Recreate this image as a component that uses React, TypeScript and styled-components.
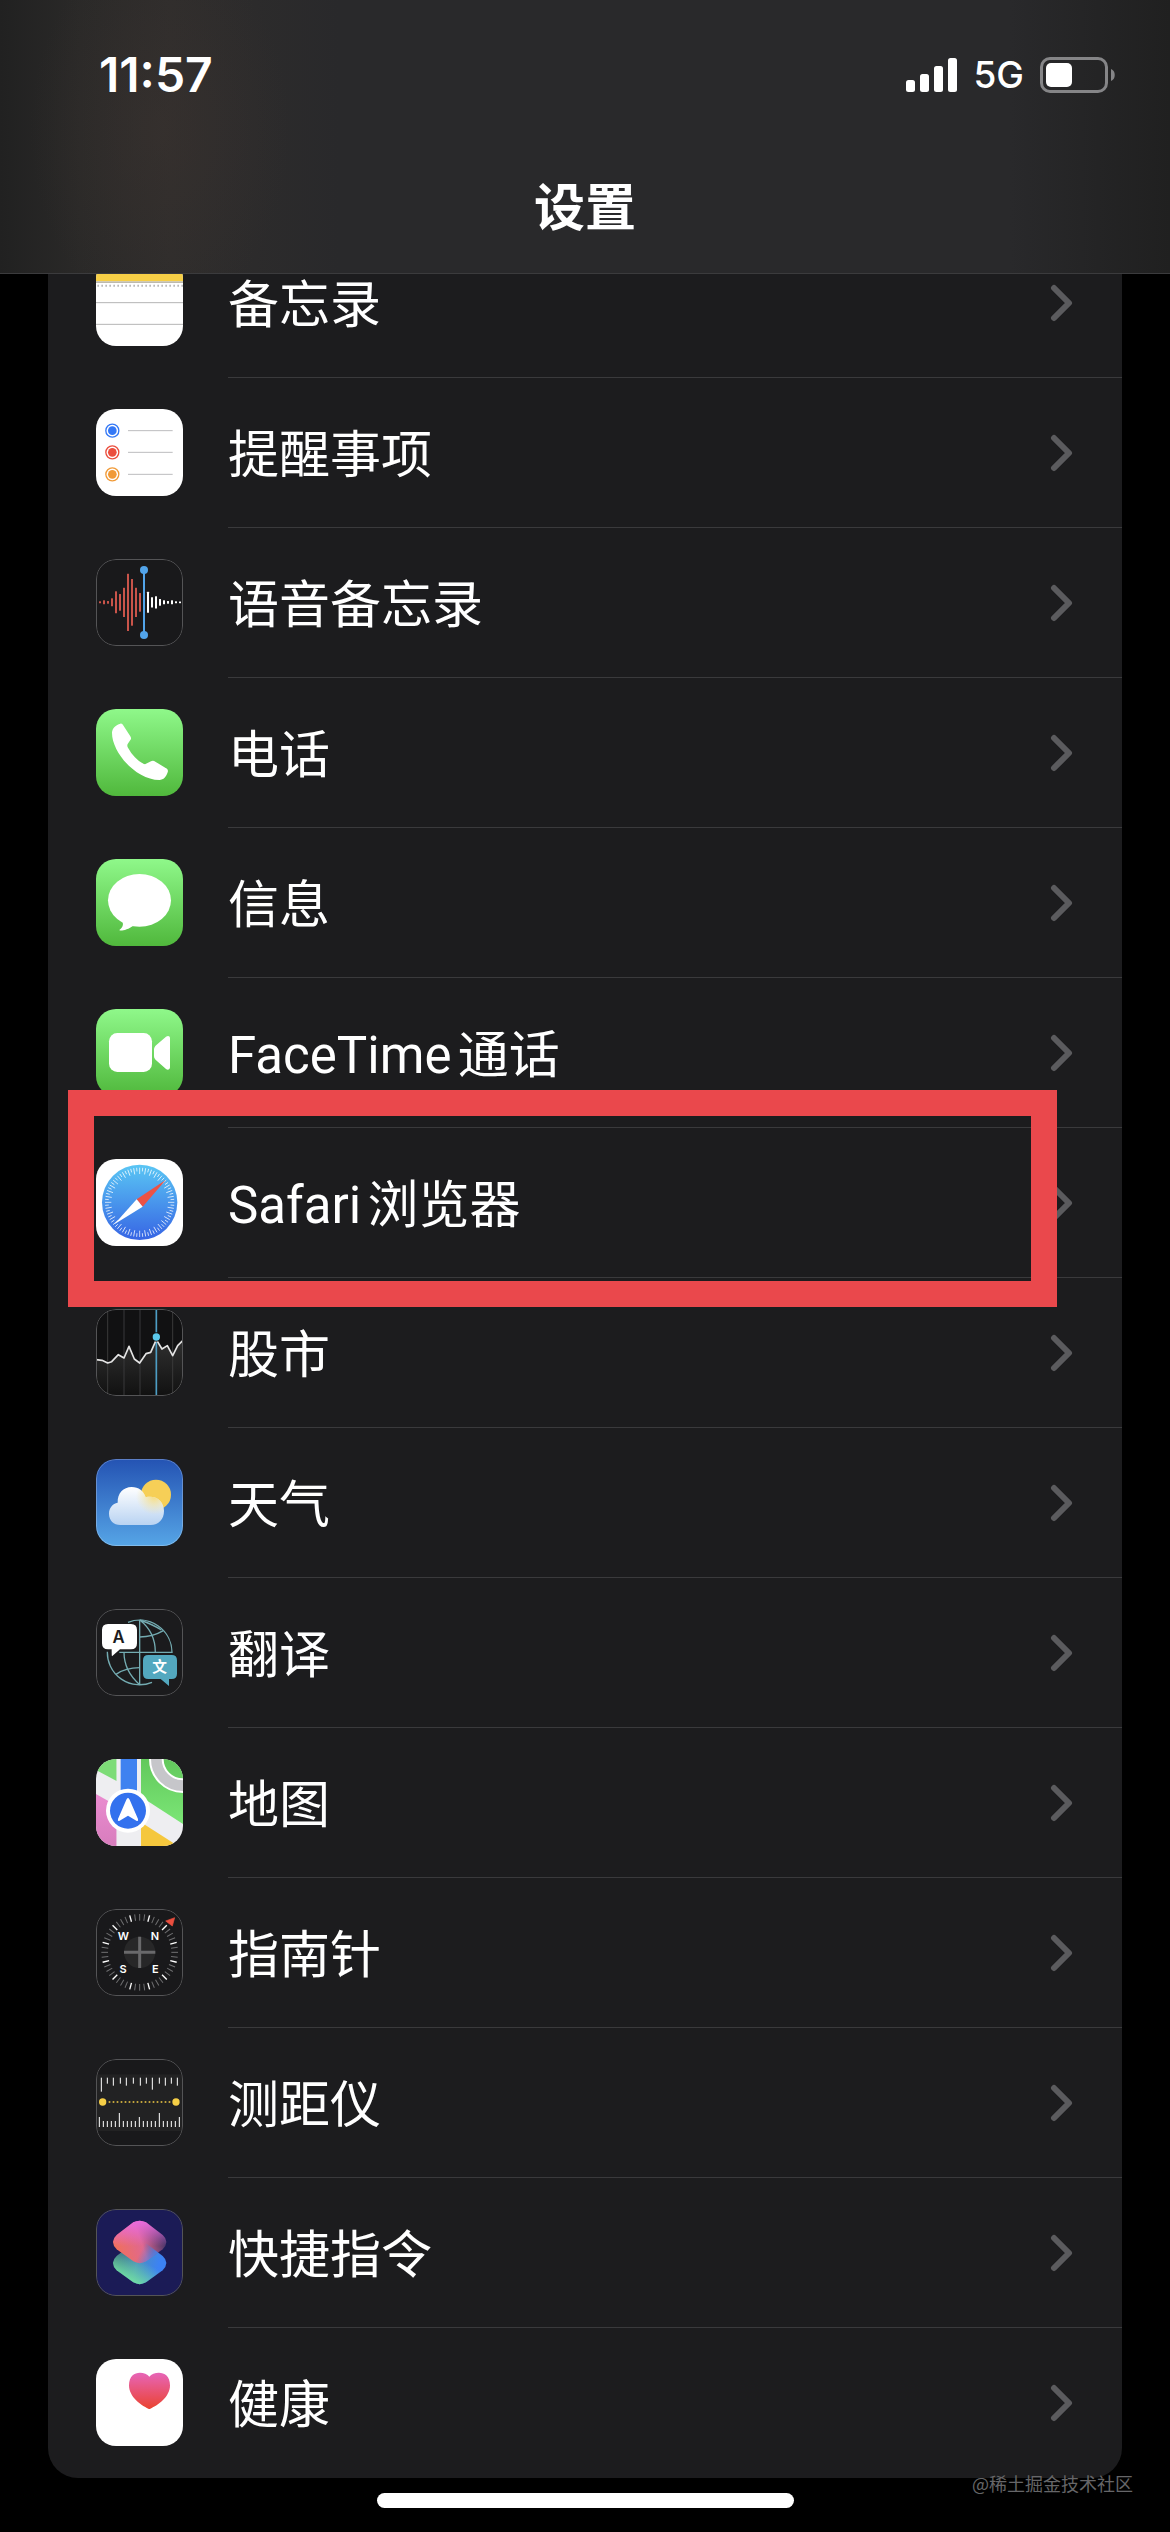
import React from "react";
import styled, { createGlobalStyle } from "styled-components";

const GlobalStyle = createGlobalStyle`
  *, *::before, *::after { box-sizing: border-box; }
  body {
    margin: 0;
    background: #000;
    color: #fff;
    font-family: Inter, "Noto Sans CJK SC", sans-serif;
  }
`;

const Screen = styled.div`
  position: relative;
  min-height: 100vh;
  display: flex;
  flex-direction: column;
  background: #000;
`;

const Header = styled.header`
  position: sticky;
  top: 0;
  z-index: 2;
  padding-bottom: 6px;
  border-bottom: 1px solid #3b3b3d;
  background:
    radial-gradient(ellipse 130px 190px at 160px 130px, rgba(62, 52, 48, 0.4), rgba(62, 52, 48, 0)),
    linear-gradient(90deg, #212121 0, #2a2928 80px, #2f2d2c 170px, #29292b 340px, #29292b calc(100% - 160px), #202020 100%);
`;

const StatusBar = styled.div`
  height: 149px;
  display: flex;
  align-items: center;
  justify-content: space-between;
  padding: 0 54px 0 99px;
`;

const Clock = styled.time`
  font-size: 48px;
  line-height: 54px;
  font-weight: 600;
`;

const StatusIcons = styled.div`
  display: flex;
  align-items: center;
  gap: 16px;
`;

const Network = styled.span`
  font-size: 37px;
  line-height: 44px;
  font-weight: 500;
`;

const Title = styled.h1`
  margin: 0;
  font-size: 51px;
  line-height: 118px;
  font-weight: 700;
  text-align: center;
`;

const Main = styled.main`
  flex: 1;
  padding: 0 48px;
`;

/* The list is scrolled so that its first row sits partly under the header. */
const List = styled.ul`
  list-style: none;
  margin: -46px 0 0;
  padding: 0;
  border-radius: 0 0 30px 30px;
  background: #1c1c1e;
`;

const Item = styled.li`
  position: relative;
`;

const RowLink = styled.a`
  height: 150px;
  display: flex;
  align-items: center;
  gap: 45px;
  padding-left: 48px;
  color: inherit;
  text-decoration: none;
`;

const RowBody = styled.span<{ $last: boolean }>`
  flex: 1;
  align-self: stretch;
  display: flex;
  align-items: center;
  justify-content: space-between;
  padding-right: 48px;
  border-bottom: 1px solid ${(p) => (p.$last ? "transparent" : "#3a3a3c")};
`;

const Label = styled.span`
  padding-top: 7px;
  font-family: Roboto, "Noto Sans CJK SC", sans-serif;
  font-size: 51px;
  line-height: 72px;
  text-autospace: normal;
`;

const AppIcon = styled.svg`
  flex: none;
  display: block;
  width: 87px;
  height: 87px;
  margin-bottom: 1px;
  border-radius: 20px;
`;

const Highlight = styled.div`
  position: absolute;
  z-index: 1;
  top: -38px;
  right: 65px;
  bottom: -29px;
  left: 20px;
  border: 26px solid #ea484c;
  pointer-events: none;
`;

const Footer = styled.footer`
  display: flex;
  justify-content: center;
  padding: 15px 0 24px;
`;

const HomeIndicator = styled.div`
  width: 417px;
  height: 15px;
  border-radius: 8px;
  background: #fff;
`;

const Watermark = styled.span`
  position: absolute;
  right: 37px;
  bottom: 36px;
  font-family: "Noto Sans CJK SC", sans-serif;
  font-size: 18px;
  line-height: 26px;
  color: #666668;
`;

const Signal = () => (
  <svg width="51" height="34" viewBox="0 0 51 34" fill="#fff" aria-hidden="true">
    <rect x="0" y="22" width="9" height="12" rx="2.5" />
    <rect x="14" y="16" width="9" height="18" rx="2.5" />
    <rect x="28" y="8" width="9" height="26" rx="2.5" />
    <rect x="42" y="0" width="9" height="34" rx="2.5" />
  </svg>
);

const Battery = () => (
  <svg width="76" height="36" viewBox="0 0 76 36" aria-hidden="true">
    <rect x="1.5" y="1.5" width="65" height="33" rx="8.5" fill="none" stroke="#858587" strokeWidth="3" />
    <rect x="6" y="6" width="26" height="24" rx="5" fill="#fff" />
    <path d="M71 12c5 1.500 5 10.500 0 12z" fill="#858587" />
  </svg>
);

const Chevron = () => (
  <svg width="24" height="38" viewBox="0 0 24 38" aria-hidden="true">
    <path d="M4 4l15 15L4 34" fill="none" stroke="#5b5b5e" strokeWidth="6" strokeLinecap="round" strokeLinejoin="round" />
  </svg>
);

const Frame = () => (
  <rect x="1.500" y="1.500" width="258" height="258" rx="58.500" fill="none" stroke="#545456" strokeWidth="3" />
);

const NotesIcon = () => (
  <>
    <rect width="261" height="261" fill="#fff" />
    <rect width="261" height="67" fill="#f7cf46" />
    <rect y="67" width="261" height="5" fill="#bdb9ad" />
    <path d="M4 80H261" stroke="#b9b9b9" strokeWidth="6" strokeDasharray="5 7" />
    <path d="M0 131H261M0 196H261" stroke="#b5b5b5" strokeWidth="3" />
  </>
);

const RemindersIcon = () => (
  <>
    <rect width="261" height="261" fill="#fff" />
    {[["#3478f6", 65], ["#eb4e3d", 130], ["#f19a37", 196]].map(([c, y]) => (
      <g key={c}>
        <circle cx="49" cy={y} r="19.500" fill="none" stroke={c as string} strokeWidth="4" />
        <circle cx="49" cy={y} r="13" fill={c as string} />
        <path d={`M96 ${y}H230`} stroke="#bcbcbe" strokeWidth="3" />
      </g>
    ))}
  </>
);

const waveHeights = [6, 12, 8, 24, 66, 50, 88, 172, 140, 88, 56, 0, 63, 31, 37, 20, 12, 8, 12, 6, 5];

const VoiceMemosIcon = () => (
  <>
    <rect width="261" height="261" fill="#19191b" />
    {waveHeights.map((h, i) => (
      <rect key={i} x={9 + i * 12} y={130 - h / 2} width="6" height={h} rx="1" fill={i < 11 ? "#c9544a" : "#fff"} />
    ))}
    <path d="M144 33V228" stroke="#52a4ea" strokeWidth="6" />
    <circle cx="144" cy="33" r="12" fill="#52a4ea" />
    <circle cx="144" cy="228" r="12" fill="#52a4ea" />
    <Frame />
  </>
);

const GreenTile = ({ id }: { id: string }) => (
  <>
    <defs>
      <linearGradient id={id} x1="0" y1="0" x2="0" y2="1">
        <stop offset="0" stopColor="#8ff88a" />
        <stop offset="1" stopColor="#50b83c" />
      </linearGradient>
    </defs>
    <rect width="261" height="261" fill={`url(#${id})`} />
  </>
);

const PhoneIcon = () => (
  <>
    <GreenTile id="phone" />
    <path
      fill="#fff"
      d="M48 72C48 58 60 47 73 44C78 43 80 46 83 51L103 82C106 87 106 90 103 93L95 105C93 109 94 113 96 116C108 138 124 154 142 164C146 166 149 166 153 163L165 157C169 154 174 155 178 158L209 177C215 180 217 184 215 190C211 203 203 213 190 213C120 213 48 130 48 72Z"
    />
  </>
);

const MessagesIcon = () => (
  <>
    <GreenTile id="messages" />
    <ellipse cx="130.500" cy="124" rx="94.500" ry="79" fill="#fff" />
    <path d="M78 186C84 196 80 206 70 213C72 218 96 212 112 200Z" fill="#fff" />
  </>
);

const FaceTimeIcon = () => (
  <>
    <GreenTile id="facetime" />
    <rect x="39" y="72" width="129" height="117" rx="25" fill="#fff" />
    <path d="M174 122C174 115 177 111 182 107L210 83C215 79 222 80 222 87V175C222 182 215 184 210 180L182 155C177 151 174 147 174 141Z" fill="#fff" />
  </>
);

const SafariIcon = () => (
  <>
    <defs>
      <linearGradient id="safari" x1="0" y1="0" x2="0" y2="1">
        <stop offset="0" stopColor="#5ac6f4" />
        <stop offset="1" stopColor="#3765e4" />
      </linearGradient>
    </defs>
    <rect width="261" height="261" fill="#fff" />
    <circle cx="131" cy="130" r="113" fill="url(#safari)" />
    {Array.from({ length: 72 }, (_, i) => (
      <path
        key={i}
        d={i % 2 ? "M131 26V37" : "M131 26V45"}
        stroke="#fff"
        strokeWidth="2.500"
        opacity="0.85"
        transform={`rotate(${i * 5} 131 130)`}
      />
    ))}
    <path d="M209 63L122 121L140 143Z" fill="#ec5245" />
    <path d="M55 196L122 121L140 143Z" fill="#fff" />
  </>
);

const stockLine = "0,152 18,154 35,162 47,158 67,137 84,147 99,112 115,150 131,162 150,134 164,130 181,92 198,120 214,110 230,140 245,110 261,94";

const StocksIcon = () => (
  <>
    <defs>
      <linearGradient id="stocks" x1="0" y1="0" x2="0" y2="1">
        <stop offset="0" stopColor="#303030" />
        <stop offset="1" stopColor="#111" />
      </linearGradient>
    </defs>
    <rect width="261" height="261" fill="#111112" />
    <polygon points={`${stockLine} 261,261 0,261`} fill="url(#stocks)" />
    <path d="M35 0V261M84 0V261M132 0V261M230 0V261" stroke="#39393a" strokeWidth="3" />
    <path d="M181 0V261" stroke="#4d9dc4" strokeWidth="5" />
    <polyline points={stockLine} fill="none" stroke="#e4e4e4" strokeWidth="5" strokeLinejoin="round" />
    <circle cx="181" cy="84" r="14" fill="#111" />
    <circle cx="181" cy="84" r="11" fill="#5ac8eb" />
    <Frame />
  </>
);

const cloudPath = "M73 198C53 198 39 184 39 164C39 146 50 134 65 131C64 103 82 84 107 84C128 84 143 96 149 115C181 108 204 128 204 156C204 181 188 198 164 198Z";

const WeatherIcon = () => (
  <>
    <defs>
      <linearGradient id="sky" x1="0" y1="0" x2="0" y2="1">
        <stop offset="0" stopColor="#2453b3" />
        <stop offset="1" stopColor="#56a5e6" />
      </linearGradient>
      <linearGradient id="cloud" x1="0" y1="0" x2="0" y2="1">
        <stop offset="0" stopColor="#fff" />
        <stop offset="1" stopColor="#b9d3f2" />
      </linearGradient>
      <radialGradient id="glow" gradientUnits="userSpaceOnUse" cx="175" cy="112" r="55">
        <stop offset="0" stopColor="#f6dc7e" />
        <stop offset="1" stopColor="#f6e6a8" stopOpacity="0" />
      </radialGradient>
    </defs>
    <rect width="261" height="261" fill="url(#sky)" />
    <circle cx="180" cy="107" r="45" fill="#f6cf57" />
    <path d={cloudPath} fill="url(#cloud)" />
    <path d={cloudPath} fill="url(#glow)" />
    <rect x="1.500" y="1.500" width="258" height="258" rx="58.500" fill="none" stroke="#fff" strokeOpacity="0.25" strokeWidth="3" />
  </>
);

const TranslateIcon = () => (
  <>
    <rect width="261" height="261" fill="#1b1b1d" />
    <g fill="none" stroke="#74acb2" strokeWidth="4">
      <path d="M96 40A97 97 0 0 1 228 130H70M131 33V227M34 128A97 97 0 0 0 168 220" />
      <path d="M131 33C160 55 178 90 178 130M131 84C155 84 180 78 202 65M131 33C152 40 170 46 196 63" />
      <path d="M84 130C84 168 102 202 131 227M60 196C80 182 105 176 131 176" />
    </g>
    <path d="M36 45H105Q123 45 123 63V103Q123 121 105 121H72L48 142Q47 142 47 121H36Q18 121 18 103V63Q18 45 36 45Z" fill="#fff" stroke="#1b1b1d" strokeWidth="4" paintOrder="stroke" />
    <path d="M157 138H227Q243 138 243 154V194Q243 210 227 210H219V231L194 210H157Q141 210 141 194V154Q141 138 157 138Z" fill="#53a8bf" stroke="#1b1b1d" strokeWidth="6" paintOrder="stroke" />
    <text x="68" y="101" fontFamily="Inter, sans-serif" fontSize="50" fontWeight="600" fill="#1b1b1d" textAnchor="middle">A</text>
    <text x="191" y="190" fontFamily="Noto Sans CJK SC, sans-serif" fontSize="44" fontWeight="700" fill="#fff" textAnchor="middle">文</text>
    <Frame />
  </>
);

const MapsIcon = () => (
  <>
    <defs>
      <linearGradient id="park" x1="0" y1="0" x2="0" y2="1">
        <stop offset="0" stopColor="#62c85c" />
        <stop offset="1" stopColor="#7be676" />
      </linearGradient>
      <linearGradient id="pink" x1="0" y1="0" x2="0" y2="1">
        <stop offset="0" stopColor="#ea8cd0" />
        <stop offset="1" stopColor="#d87dbd" />
      </linearGradient>
    </defs>
    <rect width="261" height="261" fill="#eeeef1" />
    <path d="M0 0H62V66L0 33Z" fill="#7ddc77" />
    <path d="M135 0H261V195L135 113Z" fill="url(#park)" />
    <path d="M0 105L62 140V261H0Z" fill="url(#pink)" />
    <path d="M135 190L232 252L226 261H135Z" fill="#f5c73d" />
    <path d="M62 0H135V261H62Z" fill="#eeeef1" />
    <path d="M74 0H123V120H74Z" fill="#3f82f0" />
    <circle cx="261" cy="0" r="80" fill="none" stroke="#fff" strokeWidth="44" />
    <circle cx="261" cy="0" r="80" fill="none" stroke="#c6c6ca" strokeWidth="32" />
    <circle cx="96" cy="155" r="66" fill="#fff" />
    <circle cx="96" cy="155" r="54" fill="#3371ee" />
    <path d="M96 117Q99 117 101 122L126 180Q128 188 121 185L96 170L71 185Q64 188 66 180L91 122Q93 117 96 117Z" fill="#fff" />
  </>
);

const CompassIcon = () => (
  <>
    <rect width="261" height="261" fill="#19191b" />
    {Array.from({ length: 48 }, (_, i) => (
      <path
        key={i}
        d="M131 15V35"
        stroke={i % 4 === 2 ? "#fff" : "#6f6f71"}
        strokeWidth={i % 4 === 2 ? 4 : 3}
        transform={`rotate(${i * 7.5} 131 130)`}
      />
    ))}
    <circle cx="131" cy="130" r="47" fill="#272728" />
    <path d="M84 130H178M131 83V177" stroke="#69696b" strokeWidth="9" />
    <g fontFamily="Inter, sans-serif" fontSize="33" fontWeight="600" fill="#fff" textAnchor="middle">
      <text x="82" y="94">W</text>
      <text x="177" y="94">N</text>
      <text x="81" y="192">S</text>
      <text x="178" y="192">E</text>
    </g>
    <path d="M236 26L209 36L229 51Z" fill="#ea4f3f" stroke="#ea4f3f" strokeWidth="2" />
    <Frame />
  </>
);

const topTicks = [
  [16, 42], [34, 18], [52, 24], [73, 18], [91, 24], [112, 18], [133, 24],
  [151, 18], [169, 36], [190, 18], [208, 24], [226, 18], [244, 24],
];

const MeasureIcon = () => (
  <>
    <rect width="261" height="261" fill="#19191b" />
    <rect y="46" width="261" height="170" fill="#222223" />
    {topTicks.map(([x, h]) => (
      <rect key={x} x={x - 1.5} y="56" width="3" height={h} fill="#fff" />
    ))}
    {Array.from({ length: 21 }, (_, i) => {
      const h = i % 5 ? 18 : i % 10 === 5 ? 42 : 30;
      return <rect key={i} x={8.5 + i * 12} y={204 - h} width="3" height={h} fill="#fff" />;
    })}
    <path d="M38 129H226" stroke="#f5ce46" strokeWidth="5" strokeDasharray="5 7" />
    <circle cx="20" cy="129" r="11" fill="#f5ce46" />
    <circle cx="240" cy="129" r="11" fill="#f5ce46" />
    <Frame />
  </>
);

const upperTile = "M112 40Q131 30 150 40L200 78Q222 98 200 121L150 157Q131 168 112 157L62 121Q40 98 62 78Z";
const lowerTile = "M112 103Q131 93 150 103L200 141Q222 161 200 184L150 220Q131 231 112 220L62 184Q40 161 62 141Z";

const ShortcutsIcon = () => (
  <>
    <defs>
      <linearGradient id="upper" x1="0.050" y1="0.700" x2="0.950" y2="0.450">
        <stop offset="0" stopColor="#f0705c" />
        <stop offset="0.550" stopColor="#e0688f" />
        <stop offset="1" stopColor="#4a3568" />
      </linearGradient>
      <linearGradient id="pinkTop" x1="0" y1="0" x2="0" y2="1">
        <stop offset="0" stopColor="#ea6ce0" />
        <stop offset="0.600" stopColor="#ea6ce0" stopOpacity="0" />
      </linearGradient>
      <linearGradient id="lower" x1="0.100" y1="0.200" x2="0.900" y2="0.400">
        <stop offset="0" stopColor="#33607c" />
        <stop offset="0.500" stopColor="#4a8fc0" />
        <stop offset="1" stopColor="#3c82f4" />
      </linearGradient>
      <linearGradient id="mint" x1="0.800" y1="0.450" x2="0.400" y2="1">
        <stop offset="0.200" stopColor="#6fe0a0" stopOpacity="0" />
        <stop offset="1" stopColor="#72e0a2" />
      </linearGradient>
      <linearGradient id="blend" gradientUnits="userSpaceOnUse" x1="135" y1="125" x2="180" y2="148">
        <stop offset="0" stopColor="#4a80e0" stopOpacity="0" />
        <stop offset="1" stopColor="#4284f0" />
      </linearGradient>
      <clipPath id="overlap">
        <path d={upperTile} />
      </clipPath>
    </defs>
    <rect width="261" height="261" fill="#1b1b56" />
    <path d={lowerTile} fill="url(#lower)" />
    <path d={lowerTile} fill="url(#mint)" />
    <path d={upperTile} fill="url(#upper)" />
    <path d={upperTile} fill="url(#pinkTop)" />
    <path d={lowerTile} fill="url(#blend)" clipPath="url(#overlap)" />
    <Frame />
  </>
);

const HealthIcon = () => (
  <>
    <defs>
      <linearGradient id="heart" x1="0" y1="0" x2="0" y2="1">
        <stop offset="0" stopColor="#e765b8" />
        <stop offset="1" stopColor="#ea4330" />
      </linearGradient>
    </defs>
    <rect width="261" height="261" fill="#fff" />
    <path d="M160 53C174 36 222 32 222 79C222 114 186 139 163 149Q160 151 157 149C135 139 99 114 99 79C99 32 146 36 160 53Z" fill="url(#heart)" />
  </>
);

type Entry = { label: string; Icon: () => React.ReactElement; highlighted?: boolean };

const entries: Entry[] = [
  { label: "备忘录", Icon: NotesIcon },
  { label: "提醒事项", Icon: RemindersIcon },
  { label: "语音备忘录", Icon: VoiceMemosIcon },
  { label: "电话", Icon: PhoneIcon },
  { label: "信息", Icon: MessagesIcon },
  { label: "FaceTime通话", Icon: FaceTimeIcon },
  { label: "Safari浏览器", Icon: SafariIcon, highlighted: true },
  { label: "股市", Icon: StocksIcon },
  { label: "天气", Icon: WeatherIcon },
  { label: "翻译", Icon: TranslateIcon },
  { label: "地图", Icon: MapsIcon },
  { label: "指南针", Icon: CompassIcon },
  { label: "测距仪", Icon: MeasureIcon },
  { label: "快捷指令", Icon: ShortcutsIcon },
  { label: "健康", Icon: HealthIcon },
];

export default function App() {
  return (
    <Screen lang="zh-CN">
      <GlobalStyle />
      <Header>
        <StatusBar>
          <Clock>11:57</Clock>
          <StatusIcons>
            <Signal />
            <Network>5G</Network>
            <Battery />
          </StatusIcons>
        </StatusBar>
        <Title>设置</Title>
      </Header>
      <Main>
        <List>
          {entries.map(({ label, Icon, highlighted }, i) => (
            <Item key={label}>
              <RowLink href="#">
                <AppIcon viewBox="0 0 261 261" aria-hidden="true">
                  <Icon />
                </AppIcon>
                <RowBody $last={i === entries.length - 1}>
                  <Label>{label}</Label>
                  <Chevron />
                </RowBody>
              </RowLink>
              {highlighted && <Highlight />}
            </Item>
          ))}
        </List>
      </Main>
      <Footer>
        <HomeIndicator />
      </Footer>
      <Watermark>@稀土掘金技术社区</Watermark>
    </Screen>
  );
}
